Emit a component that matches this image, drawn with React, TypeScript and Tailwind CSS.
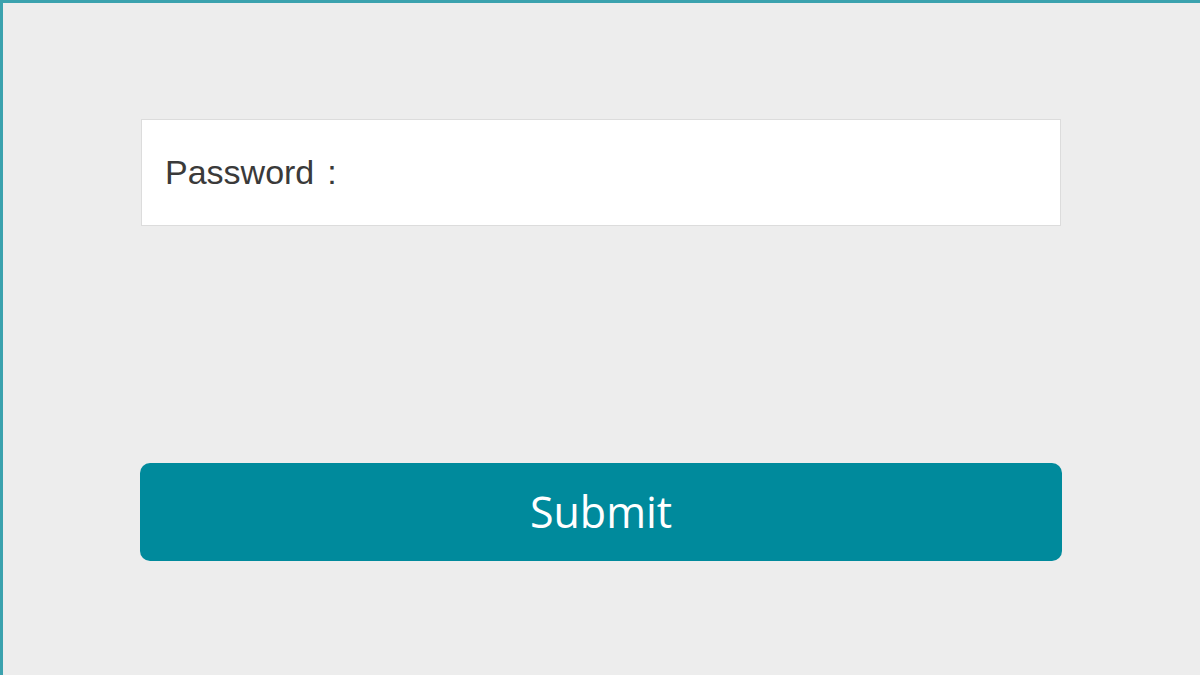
export default function App() {
  return (
    <div className="h-[675px] w-full overflow-hidden border-l-[3px] border-t-[3px] border-[#3ba2ae] bg-[#ededed] pl-[137px] pt-[116px]">
      <div className="flex w-[922px] flex-col">
        <label className="mx-[1px] flex h-[107px] w-[920px] items-center border border-[#dcdcdc] bg-white pl-[23px] text-[34px] text-[#3a3a3a] [font-family:'Liberation_Sans',Arial,sans-serif]">
          <span>Password</span>
          <span className="ml-[13px]">:</span>
          <input
            type="password"
            className="ml-2 h-full flex-1 bg-transparent outline-none"
          />
        </label>
        <button
          type="submit"
          className="mt-[237px] h-[98px] w-[922px] rounded-[10px] bg-[#008a9c] text-[43px] text-white [font-family:'Open_Sans',sans-serif]"
        >
          Submit
        </button>
      </div>
    </div>
  );
}
